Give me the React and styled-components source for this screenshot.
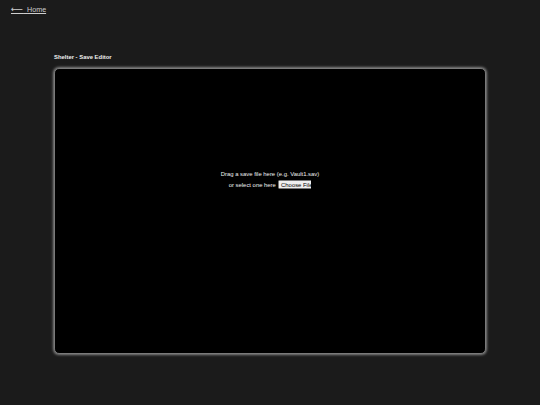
import React from 'react';
import styled, { createGlobalStyle } from 'styled-components';

// the page is laid out at 1280x960 and shrunk to the 540px window
const SCALE = 540 / 1280;

const GlobalStyle = createGlobalStyle`
    html, body {
        margin: 0;
        padding: 0;
        background: #1b1b1b;
        font-family: "Liberation Sans", Arial, sans-serif;
    }
`;

const Page = styled.div`
    zoom: ${SCALE};
    width: 1280px;
    height: 960px;
    background: #1b1b1b;
    color: #e6e6e6;
    display: flex;
    flex-direction: column;
`;

const TopBar = styled.nav`
    padding: 9px 26px 0;
    height: 42px;
`;

const HomeLink = styled.a`
    color: #cfcfcf;
    font-size: 17px;
    text-decoration: underline;
    text-underline-offset: 3px;
    cursor: pointer;
`;

const Arrow = styled.span`
    font-family: "DejaVu Sans", sans-serif;
    font-size: 20px;
`;

const Main = styled.main`
    width: 1024px;
    margin: 0 auto;
    padding-top: 78px;
`;

const Title = styled.h1`
    margin: 0 0 19px;
    font-size: 14px;
    font-weight: bold;
    color: #f0f0f0;
`;

const DropZone = styled.div`
    height: 676px;
    background: #000;
    border: 3px solid #7a7a7a;
    border-radius: 12px;
    box-shadow: 0 0 6px 2px rgba(255, 255, 255, 0.45);
    display: flex;
    flex-direction: column;
    align-items: center;
    padding-top: 241px;
    box-sizing: border-box;
    font-size: 14px;
    color: #f0f0f0;
    gap: 8px;
`;

const Line = styled.div`
    display: flex;
    align-items: center;
    gap: 4px;
`;

const FileInput = styled.input`
    width: 80px;
    font-size: 14px;
    color: #f0f0f0;
    &::file-selector-button {
        margin-right: 0;
    }
`;

export default function App() {
    return (
        <>
            <GlobalStyle />
            <Page>
                <TopBar>
                    <HomeLink><Arrow>⟵</Arrow>{'\u00a0\u00a0'}Home</HomeLink>
                </TopBar>
                <Main>
                    <Title>Shelter - Save Editor</Title>
                    <DropZone>
                        <Line>Drag a save file here (e.g. Vault1.sav)</Line>
                        <Line>
                            or select one here
                            <FileInput type="file" accept=".sav" />
                        </Line>
                    </DropZone>
                </Main>
            </Page>
        </>
    );
}
